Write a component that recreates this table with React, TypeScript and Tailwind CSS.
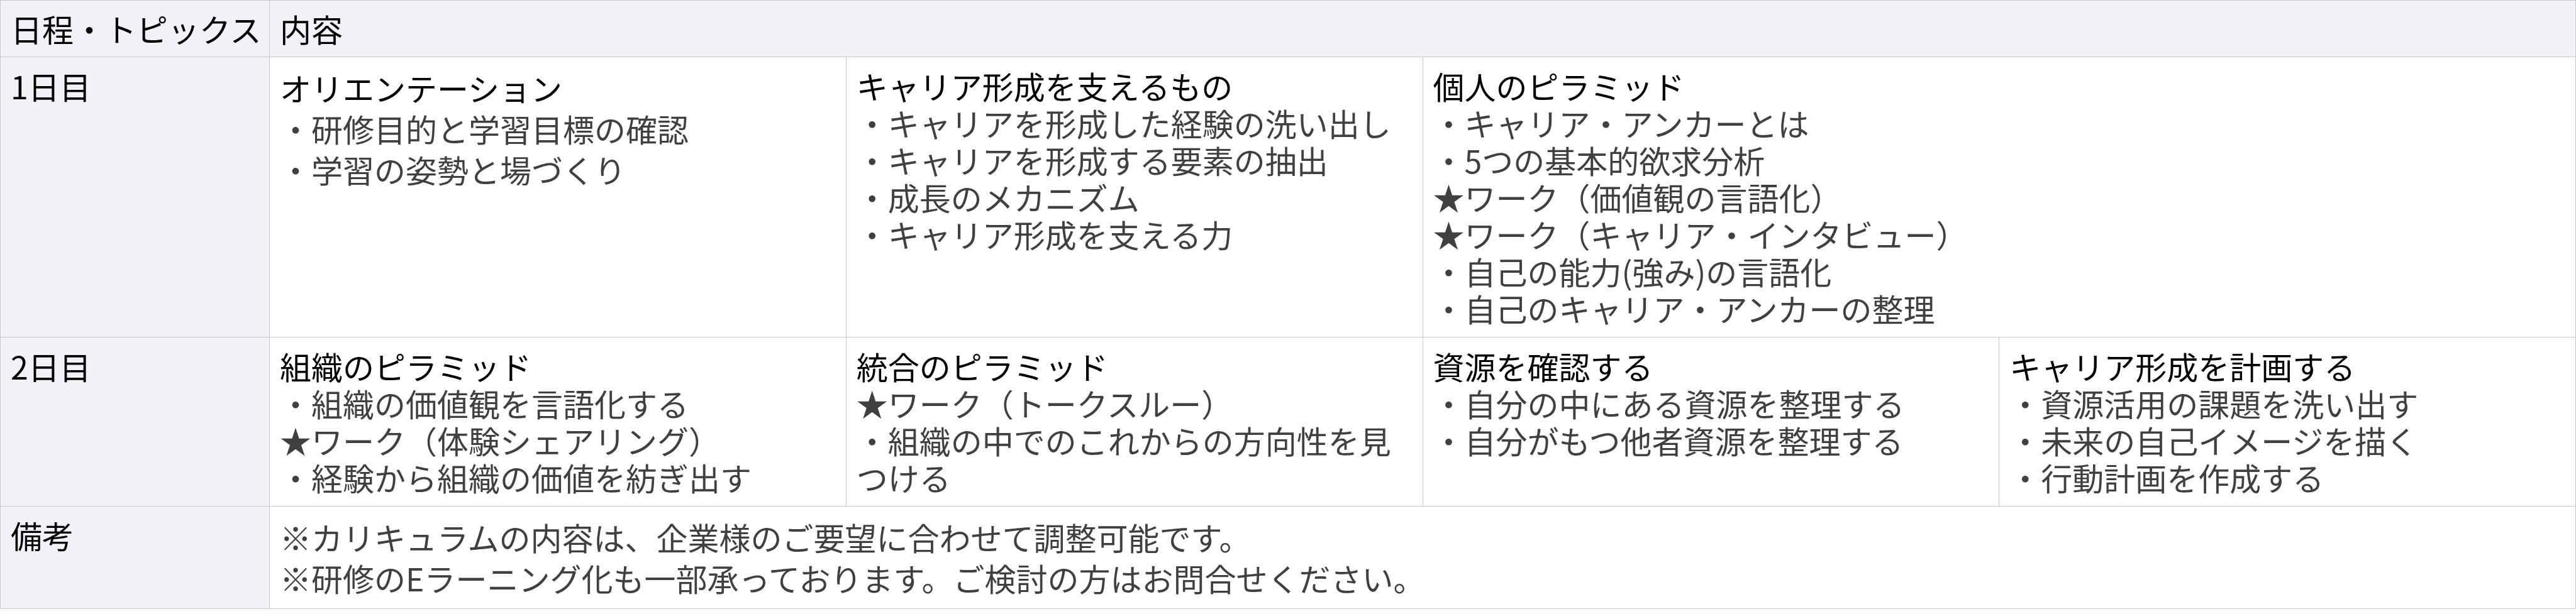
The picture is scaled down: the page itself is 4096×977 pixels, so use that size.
import React from 'react';

// ---------- Data ----------
type Block = { title: string; items: string[] };

const day1: Block[] = [
  {
    title: 'オリエンテーション',
    items: ['・研修目的と学習目標の確認', '・学習の姿勢と場づくり'],
  },
  {
    title: 'キャリア形成を支えるもの',
    items: [
      '・キャリアを形成した経験の洗い出し',
      '・キャリアを形成する要素の抽出',
      '・成長のメカニズム',
      '・キャリア形成を支える力',
    ],
  },
  {
    title: '個人のピラミッド',
    items: [
      '・キャリア・アンカーとは',
      '・5つの基本的欲求分析',
      '★ワーク（価値観の言語化）',
      '★ワーク（キャリア・インタビュー）',
      '・自己の能力(強み)の言語化',
      '・自己のキャリア・アンカーの整理',
    ],
  },
];

const day2: Block[] = [
  {
    title: '組織のピラミッド',
    items: [
      '・組織の価値観を言語化する',
      '★ワーク（体験シェアリング）',
      '・経験から組織の価値を紡ぎ出す',
    ],
  },
  {
    title: '統合のピラミッド',
    items: ['★ワーク（トークスルー）', '・組織の中でのこれからの方向性を見つける'],
  },
  {
    title: '資源を確認する',
    items: ['・自分の中にある資源を整理する', '・自分がもつ他者資源を整理する'],
  },
  {
    title: 'キャリア形成を計画する',
    items: [
      '・資源活用の課題を洗い出す',
      '・未来の自己イメージを描く',
      '・行動計画を作成する',
    ],
  },
];

const notes = [
  '※カリキュラムの内容は、企業様のご要望に合わせて調整可能です。',
  '※研修のEラーニング化も一部承っております。ご検討の方はお問合せください。',
];

const cell = 'border border-[#c8c9cc] px-4 py-4 align-top';
const side = `${cell} bg-[#f0f2f7] text-black leading-[59px] whitespace-nowrap`;

const BlockCell = ({
  block,
  span,
  loose,
}: {
  block: Block;
  span?: number;
  loose?: boolean;
}) => (
  <td
    colSpan={span}
    className={`${cell} bg-white ${loose ? 'leading-[65px]' : 'leading-[59px]'}`}
  >
    <div className="text-black">{block.title}</div>
    {block.items.map((item) => (
      <div key={item} className="text-[#404040]">
        {item}
      </div>
    ))}
  </td>
);

export default function App() {
  return (
    <div className="w-[4096px] bg-white font-['Noto_Sans_CJK_JP','Noto_Sans_CJK_SC',sans-serif] text-[50px]">
      <table className="w-full table-fixed border-collapse">
        <colgroup>
          <col className="w-[428px]" />
          <col />
          <col />
          <col />
          <col />
        </colgroup>
        <thead>
          <tr className="bg-[#f0f2f7] text-black">
            <th className={`${cell} whitespace-nowrap text-left font-normal leading-[57px]`}>
              日程・トピックス
            </th>
            <th colSpan={4} className={`${cell} text-left font-normal leading-[57px]`}>
              内容
            </th>
          </tr>
        </thead>
        <tbody>
          {/* Day 1 */}
          <tr>
            <td className={side}>1日目</td>
            <BlockCell block={day1[0]} loose />
            <BlockCell block={day1[1]} />
            <BlockCell block={day1[2]} span={2} />
          </tr>
          {/* Day 2 */}
          <tr>
            <td className={side}>2日目</td>
            {day2.map((b) => (
              <BlockCell key={b.title} block={b} />
            ))}
          </tr>
          {/* Notes */}
          <tr>
            <td className={side}>備考</td>
            <td colSpan={4} className={`${cell} bg-white text-[#404040] leading-[65px]`}>
              {notes.map((n) => (
                <div key={n}>{n}</div>
              ))}
            </td>
          </tr>
        </tbody>
      </table>
    </div>
  );
}
